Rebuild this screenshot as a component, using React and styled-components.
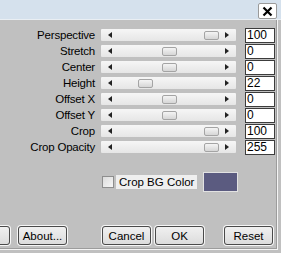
import styled, { createGlobalStyle } from 'styled-components';

const GlobalStyle = createGlobalStyle`
  html, body {
    margin: 0;
    padding: 0;
    background: #c0c0c0;
    overflow: hidden;
  }
  * {
    box-sizing: border-box;
  }
`;

const params = [
  { label: 'Perspective', value: '100', pos: 103 },
  { label: 'Stretch', value: '0', pos: 61 },
  { label: 'Center', value: '0', pos: 61 },
  { label: 'Height', value: '22', pos: 37 },
  { label: 'Offset X', value: '0', pos: 61 },
  { label: 'Offset Y', value: '0', pos: 61 },
  { label: 'Crop', value: '100', pos: 103 },
  { label: 'Crop Opacity', value: '255', pos: 103 },
];

function App() {
  return (
    <>
      <GlobalStyle />
      <Dialog>
        <TitleStrip>
          <CloseButton>
            <svg width="11" height="11" viewBox="0 0 11 11">
              <path d="M1.5 1.5 L9.5 9.5 M9.5 1.5 L1.5 9.5" stroke="#000" strokeWidth="2.2" />
            </svg>
          </CloseButton>
        </TitleStrip>
        <Body>
          <Params>
            {params.map((p) => (
              <Row key={p.label}>
                <Label>{p.label}</Label>
                <Track>
                  <Arrow side="left" />
                  <Thumb style={{ left: p.pos }} />
                  <Arrow side="right" />
                </Track>
                <ValueBox>{p.value}</ValueBox>
              </Row>
            ))}
          </Params>
          <ColorRow>
            <CheckBox />
            <CheckLabel>Crop BG Color</CheckLabel>
            <Swatch />
          </ColorRow>
          <ButtonBar>
            <Button offscreen />
            <Button>About...</Button>
            <Button gap={35}>Cancel</Button>
            <Button gap={4}>OK</Button>
            <Button gap={20}>Reset</Button>
          </ButtonBar>
        </Body>
      </Dialog>
    </>
  );
}

const Dialog = styled.div`
  width: 281px;
  height: 253px;
  display: flex;
  flex-direction: column;
  font-family: 'Liberation Sans', Arial, sans-serif;
  font-size: 11px;
  color: #000;
`;

const TitleStrip = styled.div`
  height: 20px;
  background: #d5e1ed;
  border-bottom: 1px solid #e9eef3;
  display: flex;
  justify-content: flex-end;
  align-items: flex-start;
  padding: 3px 4px 0 0;
`;

const CloseButton = styled.div`
  width: 19px;
  height: 16px;
  background: #fff;
  border: 1px solid #9a9a9a;
  border-radius: 2px;
  display: flex;
  align-items: center;
  justify-content: center;
`;

const Body = styled.div`
  width: 278px;
  height: 230px;
  border-right: 1px solid #f4f4f4;
  border-bottom: 1px solid #f4f4f4;
  box-shadow: inset -1px -1px 0 #9c9c9c;
  display: flex;
  flex-direction: column;
  padding-top: 7px;
`;

const Params = styled.div`
  display: flex;
  flex-direction: column;
`;

const Row = styled.div`
  display: grid;
  grid-template-columns: 95px 135px 30px;
  column-gap: 6px;
  align-items: center;
  height: 16px;
  margin-bottom: ${(p) => (p.last ? 0 : 0)}px;
  & > :last-child {
    margin-left: 3px;
  }
`;

const Label = styled.div`
  text-align: right;
  white-space: nowrap;
  line-height: 14px;
  font-size: 11.5px;
  letter-spacing: -0.2px;
`;

const Track = styled.div`
  position: relative;
  height: 12px;
  background: linear-gradient(#f6f6f6, #e6e6e6);
  border-radius: 1px;
  display: flex;
  align-items: center;
  justify-content: space-between;
  padding: 0 7px;
`;

const Arrow = styled.div`
  width: 0;
  height: 0;
  border-top: 3.5px solid transparent;
  border-bottom: 3.5px solid transparent;
  ${(p) =>
    p.side === 'left'
      ? 'border-right: 4px solid #222;'
      : 'border-left: 4px solid #222;'}
`;

const Thumb = styled.div`
  position: absolute;
  top: 2px;
  width: 15px;
  height: 9px;
  border: 1px solid #a4a4a4;
  border-radius: 2px;
  background: linear-gradient(#f4f4f4, #d6d6d6);
`;

const ValueBox = styled.div`
  width: 30px;
  height: 15px;
  background: #fff;
  border: 1px solid #3c3c3c;
  font-size: 12px;
  line-height: 13px;
  padding-left: 1px;
`;

const ColorRow = styled.div`
  display: flex;
  align-items: center;
  margin-top: 17px;
  padding-left: 102px;
  height: 20px;
`;

const CheckBox = styled.div`
  width: 12px;
  height: 12px;
  border: 1px solid #8e8e8e;
  background: linear-gradient(135deg, #dcdcdc, #f6f6f6);
`;

const CheckLabel = styled.div`
  margin-left: 2px;
  height: 14px;
  width: 81px;
  background: #efefef;
  line-height: 14px;
  padding-left: 3px;
  font-size: 11.5px;
`;

const Swatch = styled.div`
  margin-left: 6px;
  width: 35px;
  height: 20px;
  background: #5b5b80;
  border: 1px solid #e2e2e2;
`;

const Button = styled.div`
  width: 49px;
  height: 19px;
  margin-left: ${(p) => (p.offscreen ? -39 : p.gap || 8)}px;
  border: 1px solid #4a4a4a;
  border-radius: 3px;
  box-shadow: 0 0 0 1px #f6f6f6;
  background: linear-gradient(#f0f0f0, #dcdcdc);
  display: flex;
  align-items: center;
  justify-content: center;
  font-size: 11.5px;
  flex: none;
`;

const ButtonBar = styled.div`
  display: flex;
  margin-top: 34px;
`;

export default App;
